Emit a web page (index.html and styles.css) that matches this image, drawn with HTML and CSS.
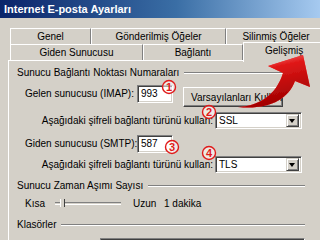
FILE: index.html
```html
<!DOCTYPE html>
<html lang="tr">
<head>
    <meta charset="UTF-8">
    <title>Internet E-posta Ayarları</title>
    <link rel="stylesheet" href="styles.css">
</head>
<body>
    <div class="window">
        <div class="titlebar">Internet E-posta Ayarları</div>

        <div class="tabs">
            <div class="tab-row back">
                <div class="tab t-genel">Genel</div>
                <div class="tab t-gonder">Gönderilmiş Öğeler</div>
                <div class="tab t-silin">Silinmiş Öğeler</div>
            </div>
            <div class="tab-row front">
                <div class="tab t-giden">Giden Sunucusu</div>
                <div class="tab t-bag">Bağlantı</div>
                <div class="tab t-gel active">Gelişmiş</div>
            </div>
        </div>

        <div class="panel">
            <div class="group-title"><span>Sunucu Bağlantı Noktası Numaraları</span><div class="etch"></div></div>

            <div class="row row-imap">
                <span class="label">Gelen sunucusu (IMAP):</span>
                <div class="input port">993</div>
                <button class="btn">Varsayılanları Kullan</button>
            </div>

            <div class="row row-enc">
                <span class="label enc-label">Aşağıdaki şifreli bağlantı türünü kullan:</span>
                <div class="select"><span>SSL</span><div class="drop"></div></div>
            </div>

            <div class="row row-smtp">
                <span class="label">Giden sunucusu (SMTP):</span>
                <div class="input port">587</div>
            </div>

            <div class="row row-enc2">
                <span class="label enc-label">Aşağıdaki şifreli bağlantı türünü kullan:</span>
                <div class="select"><span>TLS</span><div class="drop"></div></div>
            </div>

            <div class="group-title g2"><span>Sunucu Zaman Aşımı Sayısı</span><div class="etch"></div></div>

            <div class="row row-slider">
                <span class="short">Kısa</span>
                <div class="slider"><div class="track"></div><div class="thumb"></div></div>
                <span class="long">Uzun</span>
                <span class="time">1 dakika</span>
            </div>

            <div class="group-title g3"><span>Klasörler</span><div class="etch"></div></div>

            <div class="row row-root">
                <span class="label">Kök klasör yolu:</span>
                <div class="input wide"></div>
            </div>
        </div>

        <svg class="overlay" width="320" height="240" viewBox="0 0 320 240">
            <defs>
                <linearGradient id="arrowFill" x1="0" y1="0" x2="0.3" y2="1">
                    <stop offset="0" stop-color="#ffa0a0"/>
                    <stop offset="0.35" stop-color="#e01818"/>
                    <stop offset="1" stop-color="#a00000"/>
                </linearGradient>
                <filter id="glow" x="-20%" y="-20%" width="140%" height="140%">
                    <feGaussianBlur in="SourceAlpha" stdDeviation="2.5"/>
                    <feOffset dx="1" dy="3"/>
                    <feComponentTransfer><feFuncA type="linear" slope="0.35"/></feComponentTransfer>
                    <feFlood flood-color="#ff3030"/>
                    <feComposite operator="in" in2="SourceAlpha"/>
                    <feMerge><feMergeNode/><feMergeNode in="SourceGraphic"/></feMerge>
                </filter>
            </defs>
            <path class="arrow" d="M238 107 C258 106 276 96 283 73 L268 66 L303 55 L310 87 L295 81 C288 100 268 110 238 107 Z"/>
            <g class="mark">
                <circle cx="169" cy="87" r="6.5"/><text x="169" y="91">1</text>
                <circle cx="209" cy="112" r="6.5"/><text x="209" y="116">2</text>
                <circle cx="172" cy="147" r="6.5"/><text x="172" y="151">3</text>
                <circle cx="209" cy="153" r="6.5"/><text x="209" y="157">4</text>
            </g>
        </svg>
    </div>
</body>
</html>
```

FILE: styles.css
```css
body {
    margin: 0;
    background: #d4d0c8;
    font-family: 'Liberation Sans', Arial, sans-serif;
    font-size: 10px;
    color: #000;
}

.window {
    position: relative;
    width: 320px;
    height: 240px;
    overflow: hidden;
    background: #d4d0c8;
}

.titlebar {
    height: 18px;
    line-height: 18px;
    padding-left: 4px;
    background: linear-gradient(to right, #0a246a, #3a6ea5 55%, #a6caf0);
    color: #fff;
    font-weight: bold;
    font-size: 11px;
}

.tabs {
    padding-top: 10px;
}

.tab-row {
    display: flex;
    height: 16px;
    padding-left: 10px;
}

.tab {
    box-sizing: border-box;
    height: 16px;
    line-height: 15px;
    text-align: center;
    border-top: 1px solid #fff;
    border-left: 1px solid #fff;
    border-right: 1px solid #808080;
    box-shadow: 1px 0 0 #404040;
    white-space: nowrap;
    flex-shrink: 0;
}

.t-genel { width: 81px; }
.t-gonder { width: 135px; }
.t-silin { width: 100px; }
.t-giden { width: 133px; }
.t-bag { width: 100px; }

.t-gel {
    width: 90px;
    text-align: left;
    padding-left: 21px;
}

.tab.active {
    position: relative;
    top: -2px;
    height: 20px;
    line-height: 15px;
    background: #d4d0c8;
    z-index: 2;
}

.panel {
    margin-left: 8px;
    border-top: 1px solid #fff;
    border-left: 1px solid #fff;
    padding: 5px 15px 0 8px;
    height: 200px;
}

.group-title {
    display: flex;
    align-items: center;
    height: 14px;
    line-height: 14px;
}

.etch {
    flex: 1;
    margin-left: 5px;
    border-top: 1px solid #808080;
    border-bottom: 1px solid #fff;
}

.row {
    display: flex;
    align-items: flex-start;
    margin-left: 8px;
}

.label {
    width: 112px;
    line-height: 18px;
    white-space: nowrap;
}

.row-imap { margin-top: 5px; }
.row-enc { margin-top: 5px; }
.row-smtp { margin-top: 6px; }
.row-enc2 { margin-top: 3px; }

.enc-label {
    width: 188px;
    line-height: 17px;
    text-align: right;
}

.input {
    box-sizing: border-box;
    height: 18px;
    line-height: 14px;
    padding-left: 3px;
    background: #fff;
    border: 1px solid;
    border-color: #808080 #fff #fff #808080;
    box-shadow: inset 1px 1px #404040, inset -1px -1px #d4d0c8;
}

.port {
    width: 36px;
    padding-top: 1px;
}

.btn {
    box-sizing: border-box;
    width: 100px;
    height: 20px;
    margin: 2px 0 0 10px;
    padding: 0 0 0 7px;
    text-align: left;
    font: inherit;
    color: #000;
    background: #d4d0c8;
    border: 1px solid;
    border-color: #fff #404040 #404040 #fff;
    box-shadow: inset -1px -1px #808080;
    white-space: nowrap;
    overflow: hidden;
}

.select {
    box-sizing: border-box;
    display: flex;
    justify-content: space-between;
    width: 87px;
    height: 17px;
    margin-left: 2px;
    padding: 2px 2px 0 3px;
    background: #fff;
    border: 1px solid;
    border-color: #808080 #fff #fff #808080;
    box-shadow: inset 1px 1px #404040, inset -1px -1px #d4d0c8;
    line-height: 12px;
}

.drop {
    position: relative;
    box-sizing: border-box;
    width: 13px;
    height: 13px;
    margin-top: -1px;
    background: #d4d0c8;
    border: 1px solid;
    border-color: #d4d0c8 #404040 #404040 #d4d0c8;
    box-shadow: inset 1px 1px #fff, inset -1px -1px #808080;
}

.drop::after {
    content: "";
    position: absolute;
    left: 2px;
    top: 4px;
    border-left: 3.5px solid transparent;
    border-right: 3.5px solid transparent;
    border-top: 4px solid #000;
}

.g2 { margin-top: 6px; }
.g3 { margin-top: 7px; }

.row-slider {
    margin-top: 4px;
    height: 14px;
    line-height: 14px;
    align-items: center;
}

.short { width: 30px; }

.slider {
    position: relative;
    width: 66px;
    height: 14px;
}

.track {
    margin-top: 5px;
    height: 1px;
    border-top: 1px solid #808080;
    border-bottom: 1px solid #fff;
}

.thumb {
    position: absolute;
    left: 5px;
    top: 2px;
    width: 3px;
    height: 8px;
    background: #d4d0c8;
    border-left: 1px solid #fff;
    border-right: 1px solid #404040;
}

.long {
    margin-left: 12px;
    width: 31px;
}

.row-root {
    margin-top: 6px;
    align-items: flex-start;
}

.row-root .label {
    width: 75px;
    padding-top: 3px;
}

.wide {
    width: 205px;
    height: 20px;
}

.overlay {
    position: absolute;
    left: 0;
    top: 0;
    pointer-events: none;
    z-index: 5;
}

.arrow {
    fill: url(#arrowFill);
    filter: url(#glow);
}

.mark circle {
    fill: rgba(255, 255, 255, 0.55);
    stroke: #e01a1a;
    stroke-width: 1.4;
}

.mark text {
    fill: #e01a1a;
    font-family: 'Liberation Sans', Arial, sans-serif;
    font-size: 11px;
    font-weight: bold;
    text-anchor: middle;
}
```
